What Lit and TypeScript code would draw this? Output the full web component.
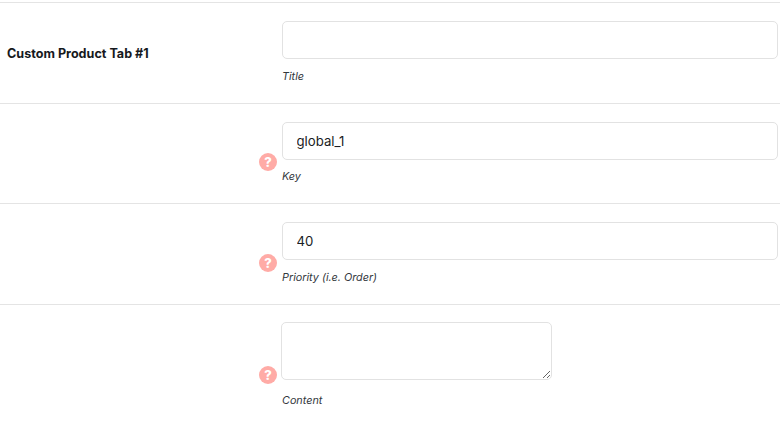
import { LitElement, html, css } from "lit";
import { customElement, state } from "lit/decorators.js";

@customElement("app-root")
export class AppRoot extends LitElement {
  @state()
  fields = [
    { heading: "Custom Product Tab #1", value: "", caption: "Title", help: false },
    { heading: "", value: "global_1", caption: "Key", help: true },
    { heading: "", value: "40", caption: "Priority (i.e. Order)", help: true },
  ];

  static styles = css`
    :host {
      display: block;
      height: 425px;
      overflow: hidden;
      background: #fff;
      padding-top: 2px;
      box-sizing: border-box;
      font-family: Inter, "Liberation Sans", sans-serif;
      color: #1d2327;
    }

    .row {
      display: flex;
      align-items: center;
      height: 100.5px;
      box-sizing: border-box;
      border-top: 1px solid #e4e4e4;
    }

    .row.last {
      height: auto;
      padding: 17px 0 17px;
    }

    .label {
      width: 259px;
      box-sizing: border-box;
      padding: 2px 0 0 7px;
      font-size: 12.6px;
      font-weight: 700;
      line-height: 20px;
      color: #16191d;
    }

    .help-slot {
      width: 23px;
      flex: none;
      align-self: stretch;
      display: flex;
      align-items: center;
    }

    .help {
      width: 18px;
      height: 18px;
      margin-top: 18px;
      border-radius: 50%;
      background: #ffaba6;
      color: #fff;
      font-size: 13px;
      font-weight: 800;
      line-height: 18px;
      text-align: center;
    }

    .last .help {
      margin-top: 20px;
    }

    .field {
      flex: 1;
      min-width: 0;
      padding-right: 2px;
    }

    input,
    textarea {
      display: block;
      box-sizing: border-box;
      border: 1px solid #e2e2e2;
      border-radius: 5px;
      background: #fff;
      font-family: inherit;
      color: #1a1d24;
      outline: none;
      margin: 0;
    }

    input {
      width: 100%;
      height: 38px;
      margin-top: -0.5px;
      padding: 0 14px 0 13.5px;
      font-size: 13.2px;
    }

    textarea {
      width: 271px;
      height: 58px;
      margin-left: -1px;
      padding: 8px 14px;
      font-size: 13.2px;
    }

    .caption {
      margin-top: 9.5px;
      font-size: 10.8px;
      font-style: italic;
      line-height: 15px;
      color: #33383d;
    }

    .last .caption {
      margin-top: 13px;
    }
  `;

  render() {
    return html`
      ${this.fields.map(
        (field) => html`
          <div class="row">
            <div class="label">${field.heading}</div>
            <div class="help-slot">
              ${field.help ? html`<div class="help">?</div>` : ""}
            </div>
            <div class="field">
              <input type="text" .value="${field.value}" />
              <div class="caption">${field.caption}</div>
            </div>
          </div>
        `
      )}
      <div class="row last">
        <div class="label"></div>
        <div class="help-slot"><div class="help">?</div></div>
        <div class="field">
          <textarea></textarea>
          <div class="caption">Content</div>
        </div>
      </div>
    `;
  }
}

declare global {
  interface HTMLElementTagNameMap {
    "app-root": AppRoot;
  }
}
